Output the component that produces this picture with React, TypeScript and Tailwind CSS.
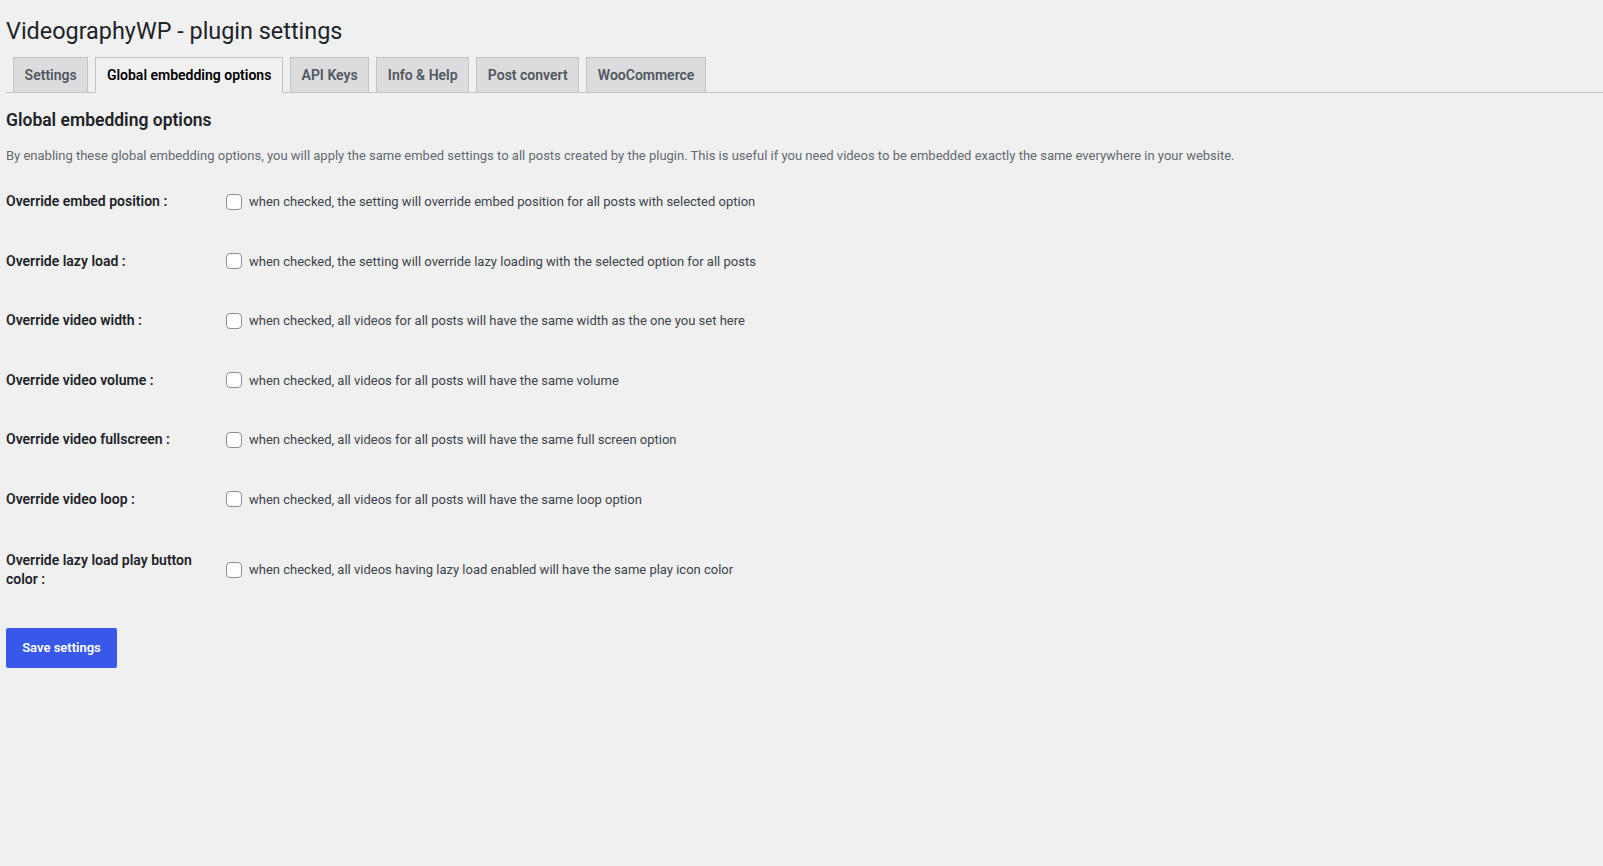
import { useState } from "react";

type Option = {
  id: string;
  label: string;
  help: string;
  tall?: boolean;
};

const tabs = ["Settings", "Global embedding options", "API Keys", "Info & Help", "Post convert", "WooCommerce"];

const options: Option[] = [
  { id: "embed_position", label: "Override embed position :", help: "when checked, the setting will override embed position for all posts with selected option" },
  { id: "lazy_load", label: "Override lazy load :", help: "when checked, the setting will override lazy loading with the selected option for all posts" },
  { id: "video_width", label: "Override video width :", help: "when checked, all videos for all posts will have the same width as the one you set here" },
  { id: "video_volume", label: "Override video volume :", help: "when checked, all videos for all posts will have the same volume" },
  { id: "video_fullscreen", label: "Override video fullscreen :", help: "when checked, all videos for all posts will have the same full screen option" },
  { id: "video_loop", label: "Override video loop :", help: "when checked, all videos for all posts will have the same loop option" },
  { id: "play_color", label: "Override lazy load play button color :", help: "when checked, all videos having lazy load enabled will have the same play icon color", tall: true },
];

const App: React.FC = () => {
  const [checked, setChecked] = useState<Record<string, boolean>>({});

  return (
    <div className="min-h-screen bg-[#f0f0f1] pl-[6px] text-[#1d2327] font-['Roboto','Liberation_Sans',sans-serif]">
      <h1 className="pt-[16px] text-[23.4px] leading-[30px] font-normal">VideographyWP - plugin settings</h1>

      <div className="mt-[11px] flex items-end border-b border-[#c3c4c7] pl-[7px] gap-[7px]">
        {tabs.map((tab, i) => {
          const active = i === 1;
          return (
            <a
              key={tab}
              href="#"
              className={
                active
                  ? "-mb-px px-[10.6px] py-[5px] text-[14px] leading-[24px] font-semibold border border-[#c3c4c7] border-b-[#f0f0f1] bg-[#f0f0f1] text-black"
                  : "-mb-px px-[10.6px] py-[5px] text-[14px] leading-[24px] font-semibold border border-[#c3c4c7] bg-[#dcdcde] text-[#50575e]"
              }
            >
              {tab}
            </a>
          );
        })}
      </div>

      <h2 className="mt-[16px] text-[17.5px] leading-[22px] font-semibold">Global embedding options</h2>
      <p className="mt-[15px] text-[13px] leading-[19.5px] text-[#646970]">
        By enabling these global embedding options, you will apply the same embed settings to all posts created by the plugin. This is useful if you need videos to be embedded exactly the same everywhere in your website.
      </p>

      <div className="mt-[6.5px] flex flex-col">
        {options.map(opt => (
          <div key={opt.id} className={opt.tall ? "flex items-center pt-[2px]" : "flex items-center"}>
            <div
              className={
                opt.tall
                  ? "w-[220px] shrink-0 py-5 pr-[10px] text-[14px] leading-[19px] font-semibold"
                  : "w-[220px] shrink-0 py-5 pr-[10px] text-[14px] leading-[19.5px] font-semibold"
              }
            >
              {opt.label}
            </div>
            <label className="flex items-center gap-[7px] text-[13px] text-[#3c434a]">
              <input
                type="checkbox"
                checked={!!checked[opt.id]}
                onChange={e => setChecked({ ...checked, [opt.id]: e.target.checked })}
                className="appearance-none w-4 h-4 rounded-[4px] border border-[#8c8f94] bg-white shrink-0"
              />
              <span>{opt.help}</span>
            </label>
          </div>
        ))}
      </div>

      <button className="mt-[19px] h-10 w-[111px] rounded-[2px] bg-[#3858e9] text-[13px] font-semibold text-white">
        Save settings
      </button>
    </div>
  );
};

export default App;
